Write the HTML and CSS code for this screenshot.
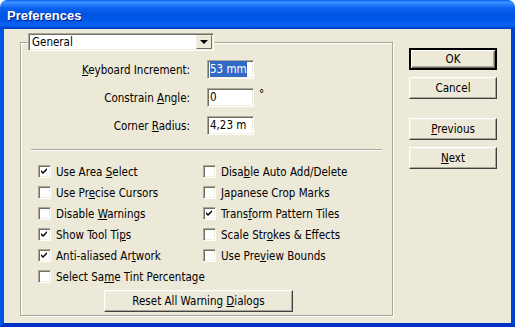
FILE: index.html
```html
<!DOCTYPE html>
<html lang="en">

<head>
    <meta charset="UTF-8">
    <title>Preferences</title>
    <link rel="stylesheet" href="styles.css">
</head>

<body>
    <div class="window">
        <div class="titlebar">
            <span class="title">Preferences</span>
        </div>

        <div class="frame">

            <!-- General settings group -->
            <fieldset class="group">
                <legend class="dropdown">
                    <span class="dropdown-value">General</span>
                    <span class="dropdown-arrow"></span>
                </legend>

                <div class="fields">
                    <label class="field-label"><u>K</u>eyboard Increment:</label>
                    <div class="textbox"><span class="selected">53 mm</span></div>
                    <span class="unit"></span>

                    <label class="field-label">Constrain <u>A</u>ngle:</label>
                    <div class="textbox">0</div>
                    <span class="unit">°</span>

                    <label class="field-label">Corner <u>R</u>adius:</label>
                    <div class="textbox">4,23 m</div>
                    <span class="unit"></span>
                </div>

                <div class="separator"></div>

                <div class="checks">
                    <div class="check"><span class="box on"></span><span>Use Area <u>S</u>elect</span></div>
                    <div class="check"><span class="box"></span><span>Disa<u>b</u>le Auto Add/Delete</span></div>
                    <div class="check"><span class="box"></span><span>Use Pr<u>e</u>cise Cursors</span></div>
                    <div class="check"><span class="box"></span><span><u>J</u>apanese Crop Marks</span></div>
                    <div class="check"><span class="box"></span><span>Disable <u>W</u>arnings</span></div>
                    <div class="check"><span class="box on"></span><span>Trans<u>f</u>orm Pattern Tiles</span></div>
                    <div class="check"><span class="box on"></span><span>Show Tool Ti<u>p</u>s</span></div>
                    <div class="check"><span class="box"></span><span>Scale Str<u>o</u>kes &amp; Effects</span></div>
                    <div class="check"><span class="box on"></span><span>Anti-aliased Ar<u>t</u>work</span></div>
                    <div class="check"><span class="box"></span><span>Use Pre<u>v</u>iew Bounds</span></div>
                    <div class="check"><span class="box"></span><span>Select Sa<u>m</u>e Tint Percentage</span></div>
                </div>

                <button class="btn reset">Reset All Warning <u>D</u>ialogs</button>
            </fieldset>

            <!-- Dialog buttons -->
            <div class="actions">
                <button class="btn default">OK</button>
                <button class="btn">Cancel</button>
                <button class="btn spaced"><u>P</u>revious</button>
                <button class="btn"><u>N</u>ext</button>
            </div>

        </div>
    </div>
</body>

</html>
```

FILE: styles.css
```css
html, body {
    margin: 0;
    padding: 0;
    background: #fff;
}

body {
    font-family: "DejaVu Sans Condensed", "Liberation Sans", sans-serif;
    font-size: 11.5px;
    color: #000;
}

.window {
    width: 515px;
    height: 327px;
    display: flex;
    flex-direction: column;
    border-radius: 7px 7px 0 0;
    overflow: hidden;
}

/* Luna title bar */
.titlebar {
    height: 29px;
    flex: none;
    display: flex;
    align-items: center;
    padding-left: 7px;
    background: linear-gradient(to bottom,
        #0058ee 0, #3d93ff 2px, #2b85fd 4px, #0b62f2 8px,
        #0054e3 14px, #0058e8 21px, #0863f4 25px, #0046d4 28px, #0030b8 29px);
}

.title {
    color: #fff;
    font-family: "Liberation Sans", sans-serif;
    font-weight: bold;
    font-size: 13px;
    text-shadow: 1px 1px 0 #0a1883;
    margin-top: 2px;
}

.frame {
    flex: 1;
    display: flex;
    align-items: flex-start;
    background: #ece9d8;
    border-left: 4px solid #0055e5;
    border-right: 4px solid #0041cf;
    border-bottom: 4px solid #0031c4;
    padding: 4px 14px 0 16px;
}

/* group box */
.group {
    width: 373px;
    box-sizing: border-box;
    margin: 0;
    padding: 0 0 3px 0;
    border: 1px solid #aca899;
    box-shadow: inset 1px 1px 0 #fff, 1px 1px 0 #fff;
    min-inline-size: 0;
}

.dropdown {
    display: flex;
    width: 186px;
    height: 18px;
    box-sizing: border-box;
    margin-left: 7px;
    padding: 0;
    background: #fff;
    border: 1px solid;
    border-color: #aca899 #fff #fff #aca899;
    box-shadow: inset 1px 1px 0 #716f64, inset -1px -1px 0 #f1efe2;
}

.dropdown-value {
    flex: 1;
    padding: 2px 0 0 3px;
    line-height: 12px;
}

.dropdown-arrow {
    width: 16px;
    height: 14px;
    margin: 1px 1px 0 0;
    box-sizing: border-box;
    background: #ece9d8;
    border: 1px solid;
    border-color: #f1efe2 #716f64 #716f64 #f1efe2;
    display: flex;
    align-items: center;
    justify-content: center;
}

.dropdown-arrow::after {
    content: "";
    border-left: 4px solid transparent;
    border-right: 4px solid transparent;
    border-top: 4px solid #000;
}

.fields {
    display: grid;
    grid-template-columns: 169px 47px auto;
    column-gap: 17px;
    row-gap: 9px;
    padding-top: 9px;
    align-items: center;
}

.field-label {
    text-align: right;
}

.textbox {
    height: 19px;
    box-sizing: border-box;
    background: #fff;
    border: 1px solid;
    border-color: #aca899 #fff #fff #aca899;
    box-shadow: inset 1px 1px 0 #716f64, inset -1px -1px 0 #f1efe2;
    padding: 2px 0 0 2px;
    line-height: 13px;
    white-space: nowrap;
    overflow: hidden;
}

.selected {
    background: #316ac5;
    color: #fff;
    padding: 1px 0;
}

.unit {
    margin-left: -12px;
    align-self: start;
    margin-top: -1px;
}

.separator {
    margin: 14px 10px 0;
    border-top: 1px solid #aca899;
    border-bottom: 1px solid #fff;
}

.checks {
    display: grid;
    grid-template-columns: 165px auto;
    grid-auto-rows: 21px;
    padding: 10px 0 0 17px;
}

.check {
    display: flex;
    align-items: center;
    gap: 5px;
    white-space: nowrap;
}

.box {
    width: 13px;
    height: 13px;
    box-sizing: border-box;
    flex: none;
    background: #fff;
    border: 1px solid;
    border-color: #aca899 #fff #fff #aca899;
    box-shadow: inset 1px 1px 0 #716f64, inset -1px -1px 0 #f1efe2;
}

.box.on {
    background: #fff url("data:image/svg+xml,%3Csvg xmlns='http://www.w3.org/2000/svg' width='11' height='11'%3E%3Cpath d='M2 4v2l2 2 4-4V2L4 6z' fill='%23000'/%3E%3C/svg%3E") no-repeat 0 0;
}

/* classic push buttons */
.btn {
    font: inherit;
    color: #000;
    width: 88px;
    height: 22px;
    padding: 0;
    background: #ece9d8;
    border: 1px solid;
    border-color: #fff #404040 #404040 #fff;
    box-shadow: inset -1px -1px 0 #aca899, inset 1px 1px 0 #f1efe2;
}

.btn.default {
    outline: 1px solid #000;
    outline-offset: -1px;
    border-width: 2px;
    border-color: #000;
    box-shadow: inset 1px 1px 0 #fff, inset -1px -1px 0 #716f64, inset -2px -2px 0 #aca899;
}

.reset {
    width: 189px;
    margin: 3px 0 0 83px;
    display: block;
}

.actions {
    display: flex;
    flex-direction: column;
    gap: 7px;
    margin-left: 16px;
    padding-top: 15px;
}

.actions .spaced {
    margin-top: 12px;
}
```
